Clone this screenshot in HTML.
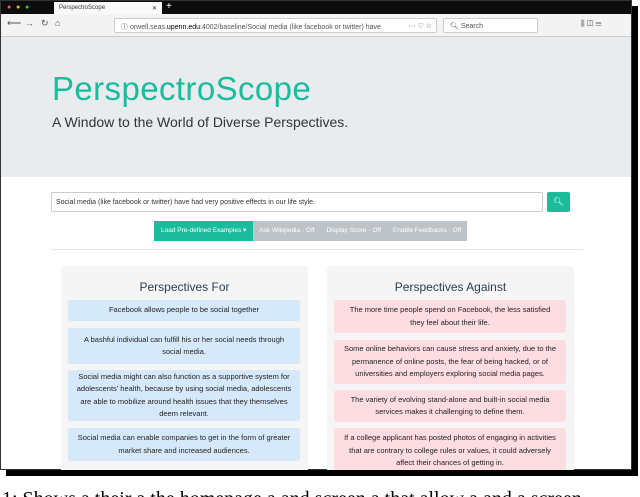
<!DOCTYPE html><html><head><style>
*{box-sizing:border-box;margin:0;padding:0}
body{width:640px;height:497px;background:#fff;position:relative;overflow:hidden;font-family:"Liberation Sans",sans-serif}
.win{position:absolute;left:0;top:0;width:632px;height:470px;border:1px solid #333;background:#fff;overflow:hidden;box-shadow:6px 6px 0 #000}
.tabs{height:13px;background:#0c0c0d;position:relative}
.tab{position:absolute;left:53px;top:1px;width:108px;height:12px;background:#f9f9fa;font-size:6px;color:#333;padding:3px 0 0 5px}
.bar{height:23px;background:#f3f3f3;border-bottom:1px solid #ccc;position:relative;font-size:7px;color:#555}
.url{position:absolute;left:113px;top:4px;width:323px;height:15px;background:#fff;border:1px solid #ccc;border-radius:2px;padding:3px 0 0 6px;white-space:nowrap;overflow:hidden}
.srch{position:absolute;left:442px;top:4px;width:95px;height:15px;background:#fff;border:1px solid #ccc;border-radius:2px;padding:3px 0 0 6px}
.hero{height:140px;background:#e9ecef;position:relative}
h1{position:absolute;left:51px;top:33px;font-size:33px;font-weight:300;color:#1abc9c;letter-spacing:0.4px}
.sub{position:absolute;left:51px;top:77px;font-size:14px;color:#333}
.in{position:absolute;left:51px;top:192px;width:492px;height:20px;border:1px solid #ccc;border-radius:2px;font-size:7px;color:#333;padding:6px 4px}
.sb{position:absolute;left:547px;top:192px;width:23px;height:20px;background:#1abc9c;border-radius:2px;color:#fff;font-size:8px;text-align:center;line-height:20px}
.bg{position:absolute;left:154px;top:221px;height:20px;display:flex;font-size:6.5px;color:#fff}
.bg div{background:#bdc3c7;padding:0 6px;line-height:20px}
.bg div:first-child{background:#1abc9c;padding:0 7px}
.hr{position:absolute;left:51px;top:249px;width:532px;border-top:1px solid #e5e5e5}
.pan{position:absolute;top:266px;width:247px;height:210px;background:#f5f5f5;border-radius:3px}
.pan h2{font-weight:400;font-size:12px;color:#2c3e50;text-align:center;margin-top:14px;height:22px}
.c{position:absolute;left:7px;width:232px;border-radius:3px;font-size:7.5px;line-height:12.5px;color:#222;text-align:center;display:flex;align-items:center;justify-content:center;padding:0 8px}
.f{background:#d6e9fb}.a{background:#fddde1}
.cap{position:absolute;left:2px;top:487px;width:636px;height:10px;overflow:hidden;font-family:"Liberation Serif",serif;font-size:20px;line-height:24px;color:#000;white-space:nowrap}
</style></head><body>
<div class="win">
<div class="tabs"><span style="position:absolute;left:6px;top:3px;font-size:7px;color:#f55">●</span><span style="position:absolute;left:15px;top:3px;font-size:7px;color:#fb0">●</span><span style="position:absolute;left:24px;top:3px;font-size:7px;color:#3c3">●</span><div class="tab">PerspectroScope<span style="float:right;margin-right:5px">✕</span></div><span style="position:absolute;left:165px;top:0;color:#fff;font-size:10px">+</span></div>
<div class="bar"><span style="position:absolute;left:6px;top:4px;font-size:10px">⟵</span><span style="position:absolute;left:24px;top:4px;font-size:9px">→</span><span style="position:absolute;left:40px;top:4px;font-size:9px">↻</span><span style="position:absolute;left:54px;top:4px;font-size:9px">⌂</span>
<div class="url">ⓘ orwell.seas.<b style="color:#000;font-weight:400">upenn.edu</b>:4002/baseline/Social media (like facebook or twitter) have <span style="position:absolute;right:4px;background:#fff">··· ♡ ☆</span></div>
<div class="srch">🔍︎ Search</div><span style="position:absolute;left:580px;top:5px;font-size:8px">⫼ ◫ ☰</span></div>
<div class="hero"><h1>PerspectroScope</h1><div class="sub">A Window to the World of Diverse Perspectives.</div></div>
</div>
<div style="position:absolute;left:0;top:0;width:632px;height:470px;overflow:hidden">
<div class="in">Social media (like facebook or twitter) have had very positive effects in our life style.</div>
<div class="sb">🔍︎</div>
<div class="bg"><div>Load Pre-defined Examples ▾</div><div>Ask Wikipedia - Off</div><div>Display Score - Off</div><div>Enable Feedbacks - Off</div></div>
<div class="hr"></div>
<div class="pan" style="left:61px"><h2>Perspectives For</h2>
<div class="c f" style="top:34px;height:21px">Facebook allows people to be social together</div>
<div class="c f" style="top:62px;height:36px">A bashful individual can fulfill his or her social needs through social media.</div>
<div class="c f" style="top:104px;height:51px">Social media might can also function as a supportive system for adolescents' health, because by using social media, adolescents are able to mobilize around health issues that they themselves deem relevant.</div>
<div class="c f" style="top:162px;height:33px">Social media can enable companies to get in the form of greater market share and increased audiences.</div>
</div>
<div class="pan" style="left:327px"><h2>Perspectives Against</h2>
<div class="c a" style="top:34px;height:33px">The more time people spend on Facebook, the less satisfied they feel about their life.</div>
<div class="c a" style="top:74px;height:44px">Some online behaviors can cause stress and anxiety, due to the permanence of online posts, the fear of being hacked, or of universities and employers exploring social media pages.</div>
<div class="c a" style="top:124px;height:32px">The variety of evolving stand-alone and built-in social media services makes it challenging to define them.</div>
<div class="c a" style="top:162px;height:48px;align-items:flex-start;padding-top:4px">If a college applicant has posted photos of engaging in activities that are contrary to college rules or values, it could adversely affect their chances of getting in.</div>
</div></div>
<div class="cap">1: Shows a their a the homepage a and screen a that allow a and a screen</div>
</body></html>
